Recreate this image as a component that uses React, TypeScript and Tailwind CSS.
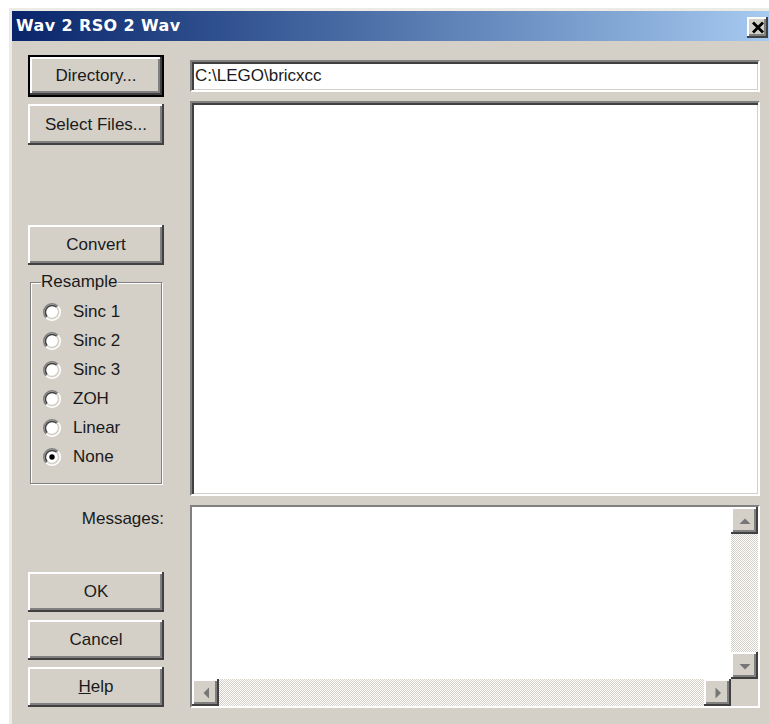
import type { ReactNode } from "react";

// classic 3D bevels
const raised =
  "bg-[#d4d0c8] shadow-[inset_-2px_-2px_0_#404040,inset_2px_2px_0_#ffffff,inset_-4px_-4px_0_#808080]";
const sunken =
  "border-2 border-t-[#808080] border-l-[#808080] border-b-white border-r-white shadow-[inset_2px_2px_0_#404040,inset_-1px_-1px_0_#d4d0c8]";
const track =
  "bg-[repeating-conic-gradient(#ffffff_0%_25%,#d4d0c8_0%_50%)] bg-[length:2px_2px]";

function PushButton({
  children,
  isDefault,
  className = "",
}: {
  children: ReactNode;
  isDefault?: boolean;
  className?: string;
}) {
  if (isDefault) {
    return (
      <div className={`border-2 border-black ${className}`}>
        <div className={`${raised} h-full flex items-center justify-center`}>{children}</div>
      </div>
    );
  }
  return (
    <div className={`${raised} flex items-center justify-center ${className}`}>{children}</div>
  );
}

function Radio({ label, checked }: { label: string; checked?: boolean }) {
  return (
    <div className="h-[29px] flex items-center">
      <svg width="18" height="18" viewBox="0 0 12 12" className="ml-[12px] mr-[12px] shrink-0">
        <circle cx="6" cy="6" r="5" fill="#ffffff" />
        <path d="M2.11 9.89 A5.5 5.5 0 0 1 9.89 2.11" fill="none" stroke="#808080" strokeWidth="1" />
        <path d="M9.89 2.11 A5.5 5.5 0 0 1 2.11 9.89" fill="none" stroke="#ffffff" strokeWidth="1" />
        <path d="M2.82 9.18 A4.5 4.5 0 0 1 9.18 2.82" fill="none" stroke="#404040" strokeWidth="1" />
        <path d="M9.18 2.82 A4.5 4.5 0 0 1 2.82 9.18" fill="none" stroke="#d4d0c8" strokeWidth="1" />
        {checked && <circle cx="6" cy="6" r="1.8" fill="#000000" />}
      </svg>
      <span>{label}</span>
    </div>
  );
}

function ArrowButton({ dir }: { dir: "up" | "down" | "left" | "right" }) {
  const pts = {
    up: "3.5,12 14.5,12 9,6.5",
    down: "3.5,7 14.5,7 9,12.5",
    left: "12,3.5 12,14.5 6.5,9",
    right: "6.5,3.5 6.5,14.5 12,9",
  }[dir];
  return (
    <div className={`${raised} w-[27px] h-[27px] shrink-0 flex items-center justify-center`}>
      <svg width="18" height="18" viewBox="0 0 18 18">
        <polygon points={pts} fill="#767676" />
      </svg>
    </div>
  );
}

export default function App() {
  return (
    <div className="w-[769px] h-[724px] overflow-hidden bg-white pl-[9px] pt-[8px] font-['Liberation_Sans',Arial,sans-serif] text-[17px] leading-[20px] text-[#1a1a1a]">
      <div className="h-full flex flex-col bg-[#d4d0c8] border-l-[3px] border-t-[3px] border-l-[#ecebe6] border-t-[#ecebe6]">
        {/* title bar */}
        <div className="h-[30px] shrink-0 flex items-center justify-between pl-[4px] pr-[1px] bg-gradient-to-r from-[#0a246a] to-[#a6caf0]">
          <span className="font-['DejaVu_Sans',Verdana,sans-serif] font-bold text-[16px] text-white tracking-[0.4px]">
            Wav 2 RSO 2 Wav
          </span>
          <div className={`${raised} w-[21px] h-[21px] mt-[3px] flex items-center justify-center`}>
            <svg width="14" height="13" viewBox="0 0 14 13">
              <path d="M2 1.5 L12 11.5 M12 1.5 L2 11.5" stroke="#000" strokeWidth="2.8" />
            </svg>
          </div>
        </div>

        {/* dialog body */}
        <div className="flex-1 flex pl-[16px] gap-[26px]">
          <div className="w-[136px] flex flex-col">
            <PushButton isDefault className="mt-[14px] h-[42px]">
              Directory...
            </PushButton>
            <PushButton className="mt-[7px] h-[41px]">Select Files...</PushButton>
            <PushButton className="mt-[80px] h-[40px]">Convert</PushButton>

            <fieldset className="mt-[7px] mx-[2px] px-0 pb-[12px] border border-[#808080] shadow-[1px_1px_0_#ffffff,inset_1px_1px_0_#ffffff]">
              <legend className="ml-[10px] px-0 bg-[#d4d0c8]">Resample</legend>
              <div className="pt-[5px]">
                <Radio label="Sinc 1" />
                <Radio label="Sinc 2" />
                <Radio label="Sinc 3" />
                <Radio label="ZOH" />
                <Radio label="Linear" />
                <Radio label="None" checked />
              </div>
            </fieldset>

            <div className="mt-[25px] text-right">Messages:</div>

            <PushButton className="mt-[43px] h-[40px]">OK</PushButton>
            <PushButton className="mt-[8px] h-[40px]">Cancel</PushButton>
            <PushButton className="mt-[7px] h-[40px]">
              <span>
                <span className="underline">H</span>elp
              </span>
            </PushButton>
          </div>

          <div className="w-[570px] flex flex-col">
            <div className={`${sunken} bg-white mt-[19px] h-[32px] flex items-center pl-[3px]`}>
              {"C:\\LEGO\\bricxcc"}
            </div>
            <div className={`${sunken} bg-white mt-[9px] h-[395px]`} />
            <div
              className={`${sunken} mt-[9px] h-[203px] grid grid-cols-[1fr_27px] grid-rows-[1fr_27px]`}
            >
              <div className="bg-white" />
              <div className={`${track} flex flex-col justify-between`}>
                <ArrowButton dir="up" />
                <ArrowButton dir="down" />
              </div>
              <div className={`${track} flex justify-between`}>
                <ArrowButton dir="left" />
                <ArrowButton dir="right" />
              </div>
              <div className="bg-[#d4d0c8]" />
            </div>
          </div>
        </div>
      </div>
    </div>
  );
}
